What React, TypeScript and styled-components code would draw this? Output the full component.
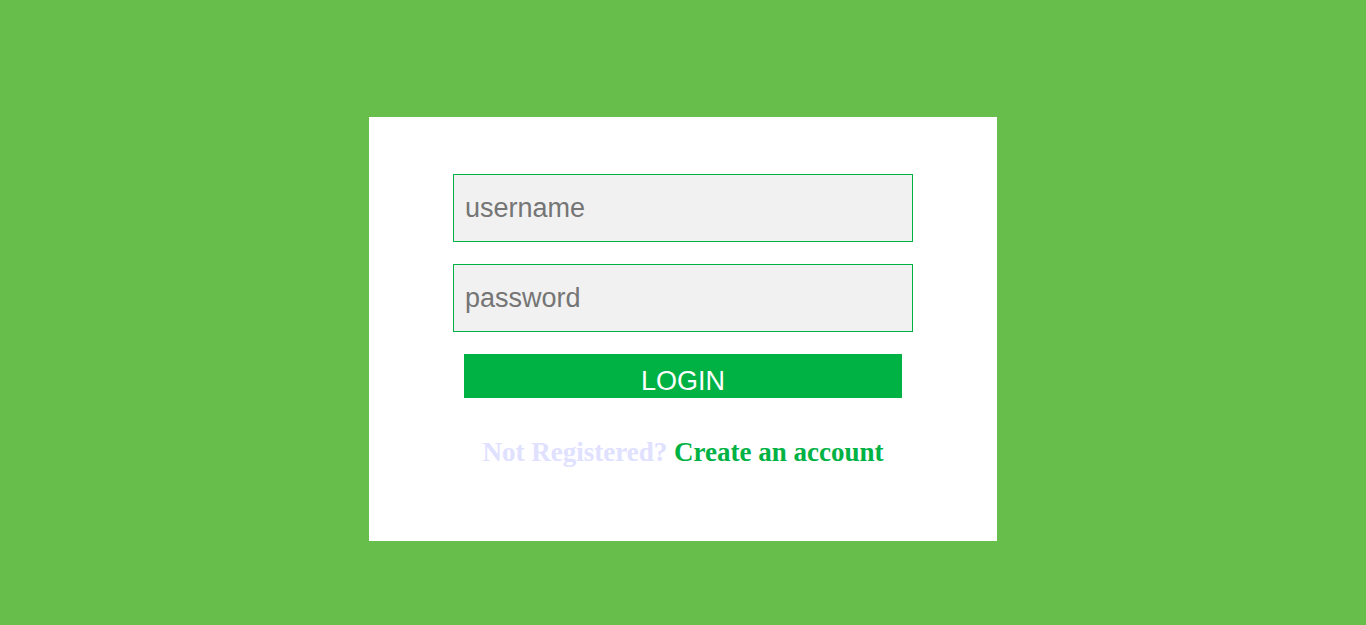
import React from "react";
import styled, { createGlobalStyle } from "styled-components";

const GlobalStyle = createGlobalStyle`
	html, body {
		margin: 0;
		padding: 0;
		background: #67be4a;
	}
	* {
		box-sizing: border-box;
	}
`;

const Page = styled.div`
	width: 100%;
	min-height: 625px;
	display: flex;
	justify-content: center;
	padding-top: 117px;
`;

const Card = styled.form`
	width: 628px;
	height: 424px;
	background: #ffffff;
	padding: 57px 84px 0;
	display: flex;
	flex-direction: column;
	align-items: center;
`;

const Field = styled.input`
	width: 460px;
	height: 68px;
	margin: 0 0 22px;
	padding: 0 11px;
	border: 1px solid #00b244;
	background: #f1f1f1;
	outline: none;
	font-family: "Liberation Sans", Arial, sans-serif;
	font-size: 27px;
	color: #333;

	&::placeholder {
		color: #757575;
	}
`;

const LoginButton = styled.button`
	width: 438px;
	height: 44px;
	border: none;
	padding: 14px 0 0;
	margin: 0;
	background: #00b244;
	color: #ffffff;
	font-family: "Liberation Sans", Arial, sans-serif;
	font-size: 27px;
	line-height: 27px;
	text-transform: uppercase;
	display: flex;
	justify-content: center;
	align-items: flex-start;
	cursor: pointer;
`;

const Message = styled.p`
	margin: 39px 0 0;
	font-family: "Liberation Serif", "Times New Roman", serif;
	font-weight: bold;
	font-size: 27px;
	line-height: 30px;
	color: #e0e0ff;

	a {
		color: #00b244;
		text-decoration: none;
	}
`;

export default function App() {
	return (
		<>
			<GlobalStyle />
			<Page>
				<Card onSubmit={(e) => e.preventDefault()}>
					<Field type="text" placeholder="username" />
					<Field type="password" placeholder="password" />
					<LoginButton type="submit">login</LoginButton>
					<Message>
						Not Registered? <a href="#">Create an account</a>
					</Message>
				</Card>
			</Page>
		</>
	);
}
